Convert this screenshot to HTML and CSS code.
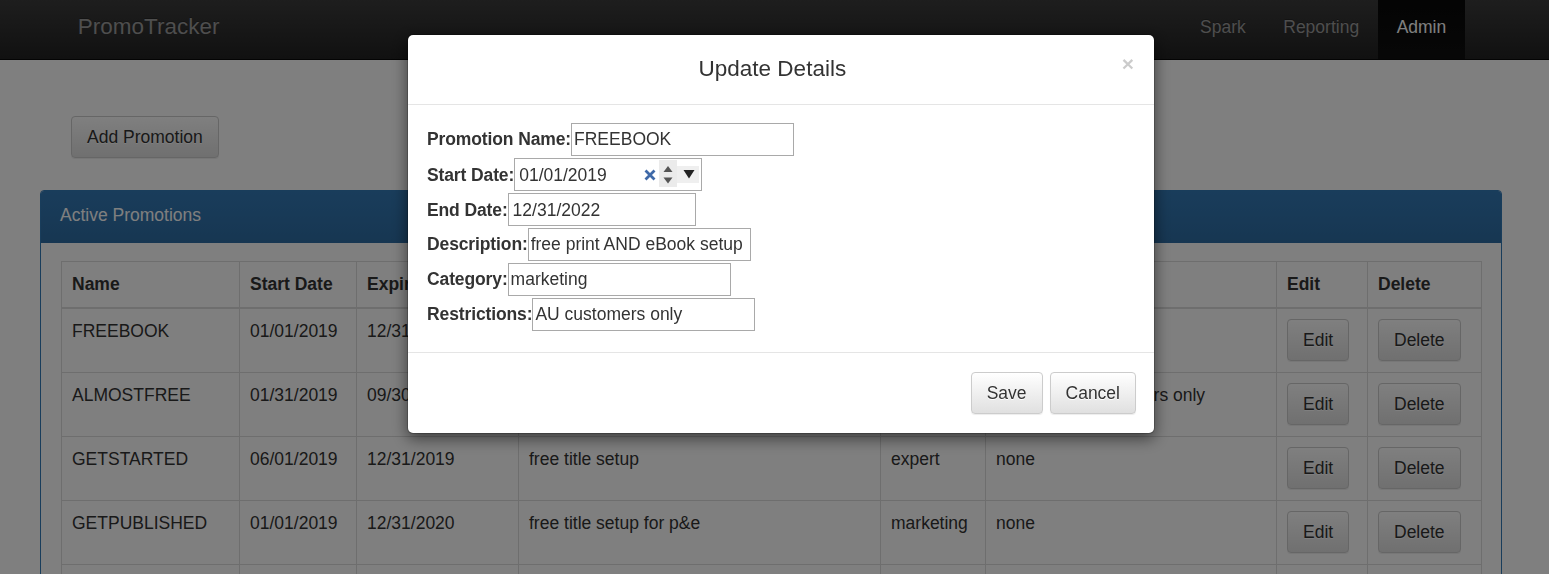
FILE: index.html
```html
<!DOCTYPE html>
<html lang="en">
<head>
<meta charset="utf-8">
<title>PromoTracker</title>
<link rel="stylesheet" href="styles.css">
</head>
<body>
<nav class="navbar">
  <a class="brand" href="#">PromoTracker</a>
  <ul class="nav">
    <li><a href="#">Spark</a></li>
    <li><a href="#">Reporting</a></li>
    <li class="active"><a href="#">Admin</a></li>
  </ul>
</nav>

<main class="page">
  <div class="toolbar">
    <button class="btn" type="button">Add Promotion</button>
  </div>

  <section class="panel">
    <div class="panel-heading">Active Promotions</div>
    <div class="panel-body">
      <table class="grid">
        <colgroup>
          <col class="c-name"><col class="c-start"><col class="c-exp"><col class="c-desc">
          <col class="c-cat"><col class="c-restr"><col class="c-edit"><col class="c-del">
        </colgroup>
        <thead>
          <tr>
            <th>Name</th><th>Start Date</th><th>Expiration Date</th><th>Description</th>
            <th>Category</th><th>Restrictions</th><th>Edit</th><th>Delete</th>
          </tr>
        </thead>
        <tbody>
          <tr>
            <td>FREEBOOK</td><td>01/01/2019</td><td>12/31/2022</td><td>free print AND eBook setup</td>
            <td>marketing</td><td>AU customers only</td>
            <td><button class="btn" type="button">Edit</button></td>
            <td><button class="btn" type="button">Delete</button></td>
          </tr>
          <tr>
            <td>ALMOSTFREE</td><td>01/31/2019</td><td>09/30/2019</td><td>discounted title setup</td>
            <td>marketing</td><td>AU and NZ customers only</td>
            <td><button class="btn" type="button">Edit</button></td>
            <td><button class="btn" type="button">Delete</button></td>
          </tr>
          <tr>
            <td>GETSTARTED</td><td>06/01/2019</td><td>12/31/2019</td><td>free title setup</td>
            <td>expert</td><td>none</td>
            <td><button class="btn" type="button">Edit</button></td>
            <td><button class="btn" type="button">Delete</button></td>
          </tr>
          <tr>
            <td>GETPUBLISHED</td><td>01/01/2019</td><td>12/31/2020</td><td>free title setup for p&amp;e</td>
            <td>marketing</td><td>none</td>
            <td><button class="btn" type="button">Edit</button></td>
            <td><button class="btn" type="button">Delete</button></td>
          </tr>
          <tr>
            <td>SUMMERSALE</td><td>06/01/2019</td><td>08/31/2019</td><td>half price setup</td>
            <td>marketing</td><td>none</td>
            <td><button class="btn" type="button">Edit</button></td>
            <td><button class="btn" type="button">Delete</button></td>
          </tr>
        </tbody>
      </table>
    </div>
  </section>
</main>

<div class="backdrop"></div>

<div class="modal" role="dialog">
  <div class="modal-header">
    <h4 class="modal-title">Update Details</h4>
    <button class="close" type="button">&times;</button>
  </div>
  <form class="modal-body">
    <div class="field"><label>Promotion Name:</label><input class="txt" type="text" value="FREEBOOK"></div>
    <div class="field"><label>Start Date:</label>
      <span class="date">
        <span class="date-val">01/01/2019</span>
        <span class="date-clear"><svg width="12" height="12" viewBox="0 0 12 12"><path d="M1.5 1.5 L10.5 10.5 M10.5 1.5 L1.5 10.5" stroke="#3f69a8" stroke-width="2.8" stroke-linecap="butt"/></svg></span>
        <span class="date-spin"><svg width="18" height="27" viewBox="0 0 18 27"><polygon points="4.5,12 9,6 13.5,12" fill="#555"/><polygon points="4.5,17.5 9,23.5 13.5,17.5" fill="#555"/></svg></span>
        <span class="date-drop"><svg width="22" height="17" viewBox="0 0 22 17"><polygon points="6.5,4 17.5,4 12,12.5" fill="#222"/></svg></span>
      </span>
    </div>
    <div class="field"><label>End Date:</label><span class="date"><span class="date-val">12/31/2022</span></span></div>
    <div class="field"><label>Description:</label><input class="txt" type="text" value="free print AND eBook setup"></div>
    <div class="field"><label>Category:</label><input class="txt" type="text" value="marketing"></div>
    <div class="field"><label>Restrictions:</label><input class="txt" type="text" value="AU customers only"></div>
  </form>
  <div class="modal-footer">
    <button class="btn" type="button">Save</button>
    <button class="btn" type="button">Cancel</button>
  </div>
</div>
</body>
</html>
```
FILE: styles.css
```css
* { box-sizing: border-box; }

html, body { height: 100%; }

body {
  margin: 0;
  overflow: hidden;
  font-family: "Liberation Sans", Arial, sans-serif;
  font-size: 17.5px;
  line-height: 24px;
  color: #333;
  background: #fff;
}

/* navbar */
.navbar {
  display: flex;
  justify-content: space-between;
  height: 60px;
  padding: 0 84px 0 59px;
  background: linear-gradient(to bottom, #3c3c3c 0, #222 100%);
  border-bottom: 1px solid #080808;
}
.brand {
  padding: 15px 18.75px 0;
  font-size: 22.5px;
  line-height: 24px;
  color: #9d9d9d;
  text-decoration: none;
  text-shadow: 0 -1px 0 rgba(0,0,0,.25);
}
.nav {
  display: flex;
  margin: 0;
  padding: 0;
  list-style: none;
}
.nav a {
  display: block;
  height: 59px;
  padding: 15px 18.75px 0;
  color: #9d9d9d;
  text-decoration: none;
  text-shadow: 0 -1px 0 rgba(0,0,0,.25);
}
.nav .active a {
  color: #fff;
  background: linear-gradient(to bottom, #080808 0, #0f0f0f 100%);
}

/* page */
.page { padding: 0 47px 0 40px; }
.toolbar { padding: 56px 0 0 31px; }

.btn {
  display: inline-block;
  margin: 0;
  padding: 8px 15px;
  font: inherit;
  font-size: 17.5px;
  line-height: 24px;
  color: #333;
  background: linear-gradient(to bottom, #fff 0, #e0e0e0 100%);
  border: 1px solid #ccc;
  border-radius: 4px;
  text-shadow: 0 1px 0 #fff;
  box-shadow: inset 0 1px 0 rgba(255,255,255,.15), 0 1px 1px rgba(0,0,0,.075);
  cursor: pointer;
}

.panel {
  margin-top: 32px;
  background: #fff;
  border: 1px solid #337ab7;
  border-radius: 4px;
}
.panel-heading {
  height: 52px;
  padding: 12px 19px 0;
  color: #fff;
  background: linear-gradient(to bottom, #337ab7 0, #2e6da4 100%);
  border-radius: 3px 3px 0 0;
}
.panel-body { padding: 18px 20px 20px; }

.grid {
  width: 100%;
  table-layout: fixed;
  border-collapse: collapse;
  border: 1px solid #ddd;
}
.c-name { width: 178px; }
.c-start { width: 117px; }
.c-exp { width: 162px; }
.c-desc { width: 362px; }
.c-cat { width: 105px; }
.c-restr { width: 291px; }
.c-edit { width: 91px; }
.c-del { width: 114px; }

.grid th, .grid td {
  padding: 10px 10px 11px;
  border: 1px solid #ddd;
  text-align: left;
  vertical-align: top;
  white-space: nowrap;
  overflow: hidden;
}
.grid th { border-bottom: 2px solid #ddd; }

/* modal */
.backdrop {
  position: fixed;
  inset: 0;
  background: rgba(0,0,0,.5);
}
.modal {
  position: fixed;
  top: 34px;
  left: 407px;
  width: 748px;
  background: #fff;
  border: 1px solid rgba(0,0,0,.2);
  border-radius: 6px;
  box-shadow: 0 5px 15px rgba(0,0,0,.5);
  background-clip: padding-box;
}
.modal-header {
  display: flex;
  align-items: flex-start;
  padding: 20px 15px 21px;
  border-bottom: 1px solid #e5e5e5;
}
.modal-title {
  flex: 1;
  margin: 0;
  font-size: 22.5px;
  line-height: 28px;
  font-weight: normal;
  text-align: center;
}
.close {
  margin: -2px 5px 0 0;
  padding: 0;
  font-family: inherit;
  font-size: 21px;
  font-weight: bold;
  line-height: 1;
  color: #000;
  opacity: .2;
  text-shadow: 0 1px 0 #fff;
  background: transparent;
  border: 0;
  cursor: pointer;
}

.modal-body {
  display: flex;
  flex-direction: column;
  gap: 2px;
  margin: 0;
  padding: 18px 19px 21px;
}
.field {
  display: flex;
  align-items: baseline;
}
.field label { font-weight: bold; letter-spacing: -0.12px; }

.txt {
  width: 223px;
  height: 33px;
  margin: 0;
  padding: 0 2px;
  font: inherit;
  color: #333;
  border: 1px solid #a9a9a9;
  border-radius: 0;
  outline: none;
}

.date {
  display: inline-flex;
  align-items: center;
  width: 188px;
  height: 33px;
  padding: 0 2px 0 4px;
  border: 1px solid #a9a9a9;
}
.date-val { flex: 1; }
.date-clear { display: flex; margin-right: 3px; }
.date-spin {
  display: flex;
  background: #ebebeb;
  align-self: flex-end;
  margin-bottom: 3px;
}
.date-drop { display: flex; background: #efefef; }

.modal-footer {
  display: flex;
  justify-content: flex-end;
  gap: 7px;
  padding: 19px 18px 19px;
  border-top: 1px solid #e5e5e5;
}
```
